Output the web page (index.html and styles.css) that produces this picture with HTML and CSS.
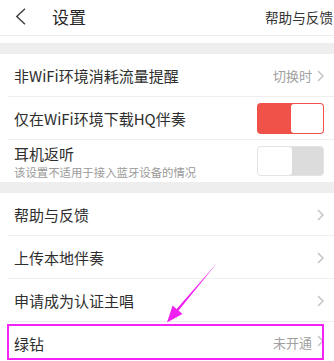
FILE: index.html
```html
<!DOCTYPE html>
<html lang="zh">
<head>
<meta charset="utf-8">
<link rel="stylesheet" href="styles.css">
</head>
<body>
<div class="page">
  <header class="topbar">
    <svg class="back" width="11" height="17" viewBox="0 0 11 17"><polyline points="10,0.8 1.8,8.5 10,16.2" fill="none" stroke="#444" stroke-width="1.5"/></svg>
    <span class="title">设置</span>
    <span class="help">帮助与反馈</span>
  </header>
  <div class="top-space"></div>
  <div class="band"></div>
  <section class="group">
    <div class="row">
      <span class="label">非WiFi环境消耗流量提醒</span>
      <span class="value">切换时</span>
      <svg class="chev" width="7" height="12" viewBox="0 0 7 12"><polyline points="1,1 6,6 1,11" fill="none" stroke="#c4c4c4" stroke-width="1.5"/></svg>
    </div>
    <div class="row">
      <span class="label">仅在WiFi环境下载HQ伴奏</span>
      <span class="toggle on"><span class="knob"></span></span>
    </div>
    <div class="row tall last">
      <div class="stack">
        <span class="label">耳机返听</span>
        <span class="sub">该设置不适用于接入蓝牙设备的情况</span>
      </div>
      <span class="toggle off"><span class="knob"></span></span>
    </div>
  </section>
  <div class="band"></div>
  <section class="group">
    <div class="row">
      <span class="label">帮助与反馈</span>
      <svg class="chev" width="7" height="12" viewBox="0 0 7 12"><polyline points="1,1 6,6 1,11" fill="none" stroke="#c4c4c4" stroke-width="1.5"/></svg>
    </div>
    <div class="row">
      <span class="label">上传本地伴奏</span>
      <svg class="chev" width="7" height="12" viewBox="0 0 7 12"><polyline points="1,1 6,6 1,11" fill="none" stroke="#c4c4c4" stroke-width="1.5"/></svg>
    </div>
    <div class="row">
      <span class="label">申请成为认证主唱</span>
      <svg class="chev" width="7" height="12" viewBox="0 0 7 12"><polyline points="1,1 6,6 1,11" fill="none" stroke="#c4c4c4" stroke-width="1.5"/></svg>
    </div>
    <div class="row last highlighted">
      <span class="label">绿钻</span>
      <span class="value">未开通</span>
      <svg class="chev" width="7" height="12" viewBox="0 0 7 12"><polyline points="1,1 6,6 1,11" fill="none" stroke="#c4c4c4" stroke-width="1.5"/></svg>
      <span class="highlight"></span>
    </div>
  </section>
  <svg class="arrow" width="334" height="361" viewBox="0 0 334 361">
    <polygon points="217,263 178.6,310.6 182.4,313.9 167,322.5 172.6,305.6 176.6,309" fill="#f020f0"/>
  </svg>
</div>
</body>
</html>
```

FILE: styles.css
```css
* { box-sizing: border-box; }
html, body { margin: 0; padding: 0; background: #fff; }
body {
  font-family: "Noto Sans CJK SC", "Noto Sans", sans-serif;
  color: #333;
  width: 334px;
  height: 361px;
  overflow: hidden;
}
.page { position: relative; width: 334px; height: 361px; overflow: hidden; }

.topbar {
  height: 36px;
  display: flex;
  align-items: center;
  border-bottom: 1px solid #ececec;
  padding-left: 15px;
  padding-bottom: 9px;
  padding-top: 7px;
}
.back { flex: none; display: block; margin-top: -1px; }
.title {
  margin-left: 26px;
  font-size: 17px;
  line-height: 20px;
  color: #262626;
}
.help {
  margin-left: auto;
  font-size: 13.6px;
  line-height: 18px;
  color: #333;
  white-space: nowrap;
  margin-right: 1px;
}

.top-space { height: 7px; }
.band { height: 11px; background: #eeeeee; }

.group { background: #fff; }
.row {
  position: relative;
  height: 43px;
  display: flex;
  align-items: center;
  padding-left: 14px;
  padding-right: 10px;
}
.row::after {
  content: "";
  position: absolute;
  left: 8px;
  right: 0;
  bottom: 0;
  height: 1px;
  background: #efefef;
}
.row.last::after { display: none; }
.row.tall { height: 42px; align-items: center; }

.label {
  font-size: 15px;
  line-height: 18px;
  color: #2e2e2e;
  white-space: nowrap;
}
.stack { display: flex; flex-direction: column; gap: 2px; padding-top: 1px; }
.sub {
  font-size: 11.4px;
  line-height: 14px;
  color: #9a9a9a;
  white-space: nowrap;
}
.value {
  margin-left: auto;
  font-size: 13px;
  line-height: 16px;
  color: #a0a0a0;
  margin-right: 5px;
}
.chev { flex: none; display: block; margin-left: auto; }
.value + .chev { margin-left: 0; }

.toggle {
  margin-left: auto;
  width: 67px;
  height: 31px;
  border-radius: 4px;
  display: flex;
  align-items: center;
  padding: 1px;
  flex: none;
}
.toggle.on {
  background: #f0524a;
  justify-content: flex-end;
  margin-right: 0;
}
.toggle.off {
  background: #dcdcdc;
  justify-content: flex-start;
  height: 30px;
  border: 1px solid #e4e4e4;
  padding: 0;
}
.knob {
  width: 32px;
  height: 29px;
  background: #fff;
  border-radius: 3px;
}
.toggle.off .knob { width: 34px; height: 28px; }

.row.highlighted { height: 43px; align-items: flex-start; padding-top: 13px; }
.highlight {
  position: absolute;
  left: 7px;
  right: 10px;
  top: 2px;
  height: 36px;
  border: 2px solid #f622f6;
  pointer-events: none;
}

.arrow {
  position: absolute;
  left: 0;
  top: 0;
  pointer-events: none;
}
```
